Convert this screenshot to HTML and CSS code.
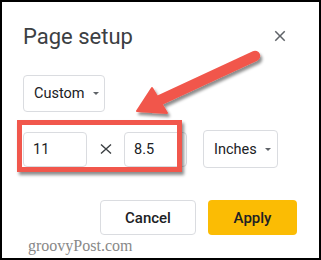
FILE: index.html
```html
<!DOCTYPE html>
<html>
<head>
<meta charset="utf-8">
<link rel="stylesheet" href="styles.css">
</head>
<body>
<div class="frame">
  <div class="header">
    <div class="title">Page setup</div>
    <svg class="close" width="18" height="18" viewBox="0 0 24 24"><path d="M19 6.41L17.59 5 12 10.59 6.41 5 5 6.41 10.59 12 5 17.59 6.41 19 12 13.41 17.59 19 19 17.59 13.41 12z" fill="#5f6368"/></svg>
  </div>
  <div class="select custom"><span>Custom</span><i class="caret"></i></div>
  <div class="sizes">
    <div class="field f1">11</div>
    <svg class="times" width="12" height="10" viewBox="0 0 12 10"><path d="M1 0.5L11 9.5M11 0.5L1 9.5" stroke="#3c4043" stroke-width="1.4"/></svg>
    <div class="field f2">8.5</div>
    <div class="select inches"><span>Inches</span><i class="caret"></i></div>
  </div>
  <div class="actions">
    <div class="btn cancel">Cancel</div>
    <div class="btn apply">Apply</div>
  </div>
  <div class="mark">groovyPost.com</div>
  <div class="highlight"></div>
  <svg class="arrow" width="321" height="260" viewBox="0 0 321 260">
    <defs>
      <filter id="sh" x="-20%" y="-20%" width="140%" height="140%">
        <feDropShadow dx="2" dy="3" stdDeviation="1.5" flood-color="#000" flood-opacity="0.45"/>
      </filter>
    </defs>
    <g filter="url(#sh)" fill="#f1574c" stroke="#f1574c">
      <line x1="255" y1="56" x2="158" y2="101" stroke-width="10.5" stroke-linecap="round"/>
      <polygon points="137,111 152,88 167,113" stroke-width="2" stroke-linejoin="round"/>
    </g>
  </svg>
</div>
</body>
</html>
```
FILE: styles.css
```css
html, body {
  margin: 0;
  padding: 0;
  background: #fff;
}
.frame {
  position: relative;
  width: 321px;
  height: 260px;
  box-sizing: border-box;
  border: 2px solid #000;
  padding: 21px 30px 0 21px;
  font-family: Roboto, "Liberation Sans", sans-serif;
  color: #202124;
  overflow: hidden;
}
.header {
  display: flex;
  justify-content: space-between;
  align-items: flex-start;
  height: 28px;
}
.title {
  font-size: 22px;
  line-height: 28px;
  color: #3c4043;
}
.close {
  margin-top: 4px;
  margin-right: 0;
}
.select {
  box-sizing: border-box;
  display: flex;
  align-items: center;
  border: 1px solid #dadce0;
  border-radius: 4px;
  font-size: 14.5px;
  color: #202124;
}
.custom {
  margin-top: 24px;
  width: 82px;
  height: 37px;
  padding-left: 10px;
}
.caret {
  display: block;
  width: 0;
  height: 0;
  border-left: 3.5px solid transparent;
  border-right: 3.5px solid transparent;
  border-top: 3.5px solid #5f6368;
  margin-left: 8px;
}
.sizes {
  display: flex;
  align-items: center;
  margin-top: 18px;
  height: 38px;
}
.field {
  box-sizing: border-box;
  height: 35px;
  border: 1px solid #dadce0;
  border-radius: 4px;
  padding-left: 9px;
  display: flex;
  align-items: center;
  font-size: 14.5px;
  color: #202124;
}
.f1 { width: 64px; }
.f2 { width: 63px; }
.times {
  margin: 0 12px 0 13px;
}
.inches {
  width: 75px;
  height: 38px;
  margin-left: 16px;
  padding-left: 10px;
}
.actions {
  display: flex;
  justify-content: flex-end;
  gap: 12px;
  margin-top: 32px;
  margin-right: -8px;
}
.btn {
  box-sizing: border-box;
  height: 35px;
  border-radius: 4px;
  display: flex;
  align-items: center;
  justify-content: center;
  font-size: 15px;
  font-weight: 500;
  color: #202124;
}
.cancel {
  width: 96px;
  border: 1px solid #dadce0;
}
.apply {
  width: 89px;
  background: #fbbc04;
}
.mark {
  margin-top: 2px;
  margin-left: 5px;
  font-family: "Liberation Serif", serif;
  font-size: 16px;
  line-height: 18px;
  color: #888888;
}
.highlight {
  position: absolute;
  left: 15px;
  top: 118px;
  width: 165px;
  height: 52px;
  box-sizing: border-box;
  border: 5px solid #f1574c;
  box-shadow: 2px 3px 3px rgba(0,0,0,0.45);
}
.arrow {
  position: absolute;
  left: -2px;
  top: -2px;
}
```
